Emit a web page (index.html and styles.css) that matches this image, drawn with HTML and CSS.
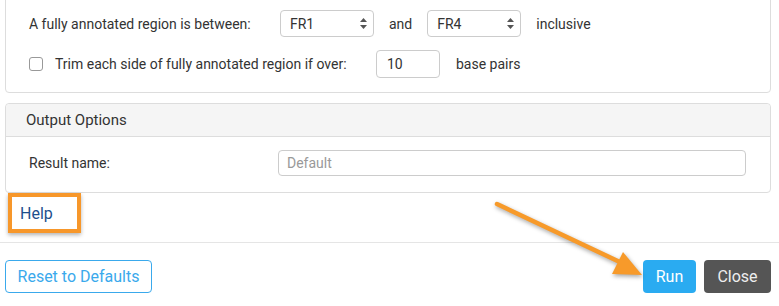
FILE: index.html
```html
<!DOCTYPE html>
<html lang="en">
<head>
    <meta charset="UTF-8">
    <title>Annotation Options</title>
    <link rel="stylesheet" href="styles.css">
</head>
<body>

    <!-- Region options -->
    <div class="panel panel-top">
        <div class="row">
            <span class="label-wide">A fully annotated region is between:</span>
            <div class="select-wrap">
                <select class="select">
                    <option>FR1</option>
                    <option>FR2</option>
                    <option>FR3</option>
                    <option>FR4</option>
                </select>
                <svg class="select-arrows" width="7" height="11" viewBox="0 0 7 11">
                    <path d="M3.5 0 L7 4 L0 4 Z" fill="#555"/>
                    <path d="M0 7 L7 7 L3.5 11 Z" fill="#555"/>
                </svg>
            </div>
            <span>and</span>
            <div class="select-wrap">
                <select class="select">
                    <option>FR4</option>
                    <option>FR1</option>
                    <option>FR2</option>
                    <option>FR3</option>
                </select>
                <svg class="select-arrows" width="7" height="11" viewBox="0 0 7 11">
                    <path d="M3.5 0 L7 4 L0 4 Z" fill="#555"/>
                    <path d="M0 7 L7 7 L3.5 11 Z" fill="#555"/>
                </svg>
            </div>
            <span>inclusive</span>
        </div>
        <div class="row row-trim">
            <input type="checkbox" class="check" id="trim">
            <label for="trim" class="label-trim">Trim each side of fully annotated region if over:</label>
            <input type="text" class="field field-small" value="10">
            <span>base pairs</span>
        </div>
    </div>

    <!-- Output options -->
    <div class="panel panel-output">
        <div class="panel-heading">Output Options</div>
        <div class="panel-body">
            <span class="label-result">Result name:</span>
            <input type="text" class="field field-wide" placeholder="Default">
        </div>
    </div>

    <div class="help-row">
        <div class="help-box"><a href="#" class="help-link">Help</a></div>
    </div>

    <div class="footer">
        <button class="btn btn-reset">Reset to Defaults</button>
        <div class="footer-right">
            <button class="btn btn-run">Run</button>
            <button class="btn btn-close">Close</button>
        </div>
    </div>

    <!-- Annotation arrow -->
    <svg class="arrow" width="779" height="306" viewBox="0 0 779 306">
        <line x1="497" y1="204" x2="624" y2="264" stroke="#f79a2a" stroke-width="4.5" stroke-linecap="round"/>
        <polygon points="623,252 612,274 642,275" fill="#f79a2a"/>
    </svg>

</body>
</html>
```

FILE: styles.css
```css
body {
    font-family: Roboto, "Liberation Sans", sans-serif;
    font-size: 14px;
    color: #333;
    margin: 0;
    background-color: white;
    position: relative;
    overflow: hidden;
    height: 306px;
}
.panel {
    border: 1px solid #ddd;
    border-radius: 4px;
    margin: 0 8px 0 5px;
    background-color: white;
}
.panel-top {
    margin-top: -10px;
    padding: 19px 0 14px 23px;
}
.row {
    display: flex;
    align-items: center;
    gap: 15px;
    height: 27px;
}
.row-trim {
    margin-top: 13px;
    height: 28px;
}
.label-wide {
    width: 236px;
}
.select-wrap {
    position: relative;
}
.select {
    appearance: none;
    -webkit-appearance: none;
    width: 94px;
    height: 27px;
    border: 1px solid #ccc;
    border-radius: 4px;
    background-color: white;
    font-family: inherit;
    font-size: 14px;
    color: #333;
    padding: 0 9px;
}
.select-arrows {
    position: absolute;
    right: 7px;
    top: 8px;
}
.check {
    appearance: none;
    -webkit-appearance: none;
    width: 14px;
    height: 14px;
    border: 1px solid #999;
    border-radius: 3px;
    margin: 0 -3px 0 0;
    background-color: white;
}
.label-trim {
    width: 306px;
}
.field {
    height: 28px;
    box-sizing: border-box;
    border: 1px solid #ccc;
    border-radius: 4px;
    font-family: inherit;
    font-size: 14px;
    color: #333;
    padding: 0 10px;
}
.field-small {
    width: 64px;
    margin-right: 1px;
}
.field-wide {
    width: 468px;
    height: 26px;
    padding: 0 8px;
}
.field-wide::placeholder {
    color: #999;
}
.panel-output {
    margin-top: 10px;
}
.panel-heading {
    background-color: #f5f5f5;
    border-bottom: 1px solid #ddd;
    border-radius: 4px 4px 0 0;
    height: 32px;
    line-height: 32px;
    padding-left: 20px;
    font-size: 15px;
}
.panel-body {
    display: flex;
    align-items: center;
    padding: 13px 0 16px 23px;
}
.label-result {
    width: 249px;
}
.help-row {
    height: 50px;
    border-bottom: 1px solid #e5e5e5;
    padding: 0 0 0 8px;
    box-sizing: border-box;
}
.help-box {
    width: 73px;
    height: 40px;
    box-sizing: border-box;
    border: 4px solid #f7972a;
    box-shadow: 0 2px 4px rgba(0, 0, 0, 0.3);
    display: flex;
    align-items: center;
    padding-left: 8px;
}
.help-link {
    color: #1d4f8c;
    text-decoration: none;
    font-size: 16px;
}
.footer {
    display: flex;
    justify-content: space-between;
    padding: 17px 8px 0 5px;
}
.footer-right {
    display: flex;
    gap: 8px;
}
.btn {
    height: 33px;
    border-radius: 4px;
    font-family: inherit;
    font-size: 16px;
    border: 1px solid transparent;
    padding: 0;
}
.btn-reset {
    width: 147px;
    background-color: white;
    border-color: #3aa9ec;
    color: #3aa9ec;
}
.btn-run {
    width: 53px;
    background-color: #2aabf1;
    color: white;
}
.btn-close {
    width: 67px;
    background-color: #555;
    color: #eee;
}
.arrow {
    position: absolute;
    left: 0;
    top: 0;
    pointer-events: none;
    filter: drop-shadow(1px 2px 2px rgba(0, 0, 0, 0.35));
}
```
